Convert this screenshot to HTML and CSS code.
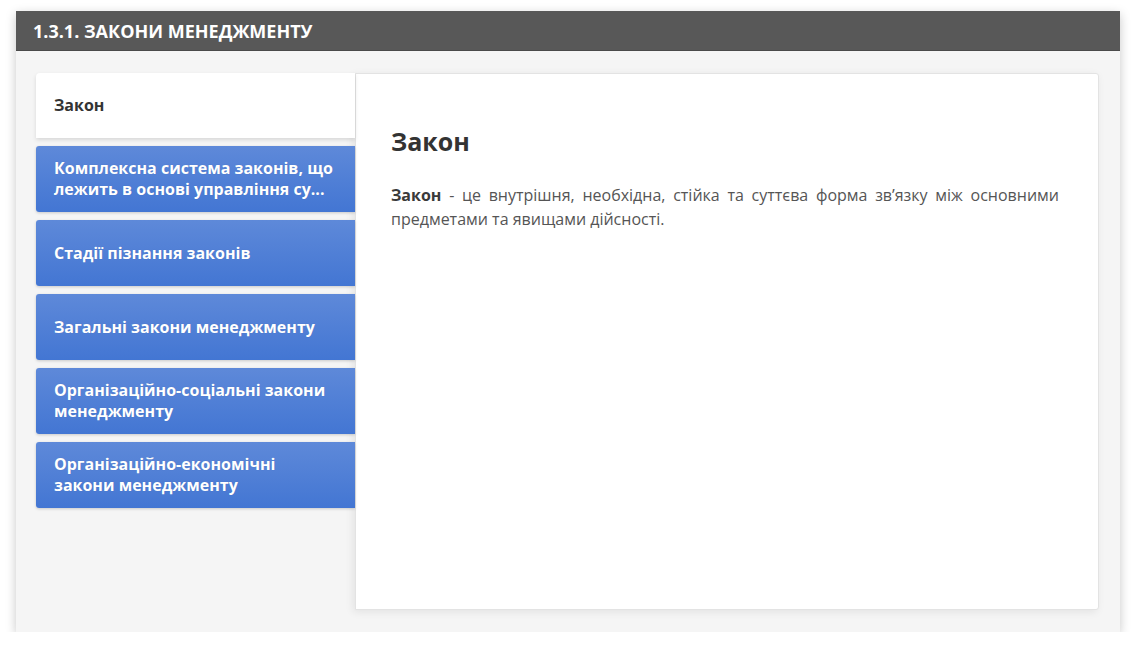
FILE: index.html
```html
<!DOCTYPE html>
<html lang="uk">
<head>
<meta charset="utf-8">
<link rel="stylesheet" href="styles.css">
</head>
<body>
<div class="window">
  <div class="header">1.3.1. ЗАКОНИ МЕНЕДЖМЕНТУ</div>
  <div class="body">
    <div class="tabs">
      <div class="tab active">Закон</div>
      <div class="tab">Комплексна система законів, що лежить в основі управління су...</div>
      <div class="tab">Стадії пізнання законів</div>
      <div class="tab">Загальні закони менеджменту</div>
      <div class="tab">Організаційно-соціальні закони менеджменту</div>
      <div class="tab">Організаційно-економічні закони менеджменту</div>
    </div>
    <div class="content">
      <h1 class="title">Закон</h1>
      <p class="text"><b>Закон</b> - це внутрішня, необхідна, стійка та суттєва форма зв’язку між основними предметами та явищами дійсності.</p>
    </div>
  </div>
</div>
</body>
</html>
```

FILE: styles.css
```css
html, body {
  margin: 0;
  padding: 0;
  background: #ffffff;
  font-family: "Open Sans", "Noto Sans", sans-serif;
}
.window {
  margin: 11px 16px 0 16px;
  width: 1104px;
  height: 621px;
  background: #f5f5f5;
  box-shadow: 0 3px 10px rgba(0, 0, 0, 0.22);
  display: flex;
  flex-direction: column;
}
.header {
  height: 40px;
  background: #585858;
  color: #ffffff;
  font-weight: 700;
  font-size: 18px;
  line-height: 40px;
  padding-left: 17px;
  box-sizing: border-box;
  border-bottom: 1px solid #4a4a4a;
}
.body {
  flex: 1;
  display: flex;
  padding: 22px 21px 22px 20px;
}
.tabs {
  width: 319px;
  display: flex;
  flex-direction: column;
  gap: 8px;
  position: relative;
  z-index: 1;
}
.tab {
  height: 66px;
  box-sizing: border-box;
  display: flex;
  align-items: center;
  padding: 0 20px 0 18px;
  font-size: 16px;
  font-weight: 700;
  line-height: 21px;
  color: #ffffff;
  background: linear-gradient(#5e89d9, #4376d3);
  border-radius: 3px 0 0 3px;
  box-shadow: 0 1px 3px rgba(0, 0, 0, 0.18);
  text-shadow: 0 0 1px rgba(0, 0, 0, 0.15);
}
.tab.active {
  height: 65px;
  background: #ffffff;
  color: #333333;
  font-size: 16px;
  text-shadow: none;
  box-shadow: 0 2px 4px rgba(0, 0, 0, 0.12);
  border-radius: 4px 0 0 0;
}
.content {
  flex: 1;
  background: #ffffff;
  border: 1px solid #e3e3e3;
  border-radius: 0 3px 3px 0;
  box-shadow: -2px 2px 8px rgba(0, 0, 0, 0.08);
  padding: 30px 39px 0 35px;
}
.title {
  margin: 20px 0 0 0;
  font-size: 25px;
  line-height: 34px;
  font-weight: 700;
  color: #333333;
}
.text {
  margin: 25px 0 0 0;
  font-size: 16px;
  line-height: 24px;
  color: #555555;
  text-align: justify;
}
.text b {
  color: #3a3a3a;
}
```
